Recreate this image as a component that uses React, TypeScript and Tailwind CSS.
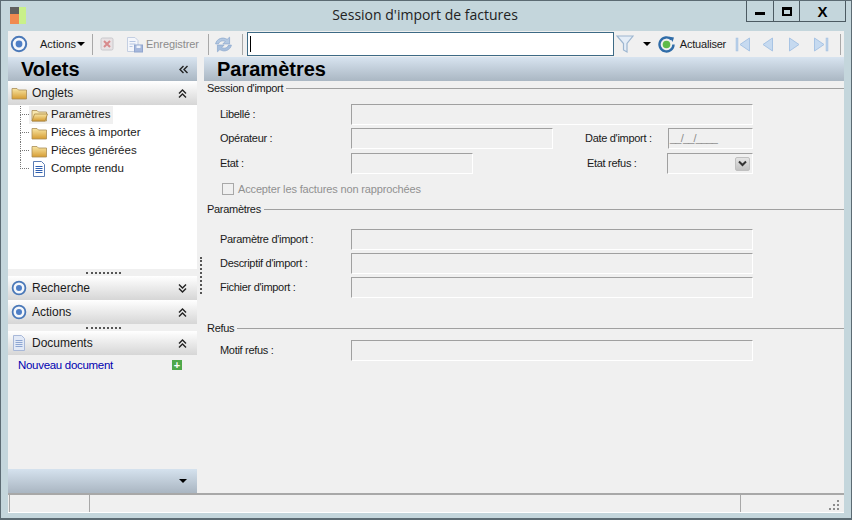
import React from "react";

const FONT = "font-['Liberation_Sans',Arial,sans-serif]";

function TargetIcon({ size = 18 }: { size?: number }) {
  return (
    <svg width={size} height={size} viewBox="0 0 18 18" className="shrink-0">
      <circle cx="9" cy="9" r="7.2" fill="#f4f7fb" stroke="#4a78b8" strokeWidth="2" />
      <circle cx="9" cy="9" r="3.4" fill="#4f7fc6" />
    </svg>
  );
}

function Folder({ open = false }: { open?: boolean }) {
  return (
    <svg width="17" height="14" viewBox="0 0 17 14" className="shrink-0">
      <defs>
        <linearGradient id="fold" x1="0" y1="0" x2="0" y2="1">
          <stop offset="0" stopColor="#f8e6a4" />
          <stop offset="1" stopColor="#d69c32" />
        </linearGradient>
      </defs>
      <path d="M1 2.500h5l1.500 1.500H15.500v9H1z" fill={open ? "#f7e7ae" : "url(#fold)"} stroke="#a98d55" strokeWidth="0.8" />
      {open && <path d="M3.500 6H16.500L14 13H1z" fill="url(#fold)" stroke="#a8843d" strokeWidth="0.8" />}
    </svg>
  );
}

function DocIcon({ light = false }: { light?: boolean }) {
  return (
    <svg width="14" height="16" viewBox="0 0 14 16" className="shrink-0">
      <path d="M1.500.5H9.500L12.500 3.500V15.500H1.500z" fill={light ? "#e2e9f6" : "#fff"} stroke={light ? "#a8b8d8" : "#5b7db5"} />
      <path d="M3.500 5.500h7M3.500 7.500h7M3.500 9.500h7M3.500 11.500h7" stroke={light ? "#8ea6d2" : "#2f5fb0"} />
    </svg>
  );
}

function Chevrons({ dir }: { dir: "up" | "down" | "left" }) {
  const d = "M1 5.500 4.500 2 8 5.500M1 9.500 4.500 6 8 9.500";
  const r = dir === "up" ? 0 : dir === "down" ? 180 : -90;
  return (
    <svg width="9" height="11" viewBox="0 0 9 11" className="shrink-0" style={{ transform: `rotate(${r}deg)` }}>
      <path d={d} fill="none" stroke="#222" strokeWidth="1.4" />
    </svg>
  );
}

function Caret({ className = "" }: { className?: string }) {
  return <span className={`block h-0 w-0 shrink-0 border-x-[4px] border-t-[4px] border-x-transparent border-t-black ${className}`} />;
}

function Sep({ className = "" }: { className?: string }) {
  return <span className={`h-[21px] w-0.5 shrink-0 border-l border-[#a8a8a8] ${className}`} />;
}

function Nav({ flip, bar, className }: { flip?: boolean; bar?: boolean; className: string }) {
  return (
    <svg width="16" height="15" viewBox="0 0 16 15" className={`shrink-0 ${className}`} style={flip ? { transform: "scaleX(-1)" } : undefined}>
      {bar && <rect x="1" y="1" width="2" height="13" fill="#b9d0ea" stroke="#a2bedd" strokeWidth="0.5" />}
      <path d="M14.500 1V14L5 7.500z" fill="#c6daf0" stroke="#a8c4e4" />
    </svg>
  );
}

function SectionHeader({ icon, title, chevron }: { icon: React.ReactNode; title: string; chevron: "up" | "down" }) {
  return (
    <div className="flex h-6 shrink-0 items-center bg-gradient-to-b from-white to-[#d6d6d6] pl-px">
      <span className="flex w-5 justify-center">{icon}</span>
      <span className="ml-[3px] text-[12px] text-[#1a1a1a]">{title}</span>
      <span className="ml-auto mr-[10px] flex"><Chevrons dir={chevron} /></span>
    </div>
  );
}

function Dots() {
  return (
    <div className="flex h-[7px] shrink-0 items-center justify-center">
      <span className="ml-[2px] w-[35px] border-t-2 border-dotted border-[#555]" />
    </div>
  );
}

function TreeRow({ icon, label, selected, last }: { icon: React.ReactNode; label: string; selected?: boolean; last?: boolean }) {
  return (
    <div className="flex h-[18px] items-center">
      <span className="ml-[12px] h-[18px] w-[9px] shrink-0">
        <span className="block h-[9px] w-full border-b border-l border-dotted border-[#777]" />
        {!last && <span className="block h-[9px] border-l border-dotted border-[#777]" />}
      </span>
      <span className={`flex h-[18px] items-center pl-px pr-[3px] ${selected ? "bg-[#f0f0f0]" : ""}`}>
        <span className="flex w-[18px] justify-center">{icon}</span>
        <span className="ml-[3px] text-[11.500px] text-[#1a1a1a]">{label}</span>
      </span>
    </div>
  );
}

function Field({ w, children }: { w: string; children?: React.ReactNode }) {
  return (
    <div className={`${w} flex h-[21px] shrink-0 items-center border border-b-white border-l-[#a0a0a0] border-r-white border-t-[#a0a0a0] bg-[#f0f0f0]`}>
      {children}
    </div>
  );
}

function Legend({ title, className = "" }: { title: string; className?: string }) {
  return (
    <div className={`flex h-3.5 items-center ${className}`}>
      <span className="ml-[3px] text-[11px] tracking-[-0.3px] text-[#1a1a1a]">{title}</span>
      <span className="ml-[3px] h-0 flex-1 border-t border-[#a0a0a0]" />
    </div>
  );
}

function Label({ children, className = "w-[131px]" }: { children: string; className?: string }) {
  return <span className={`shrink-0 text-[11px] tracking-[-0.3px] text-[#1a1a1a] ${className}`}>{children}</span>;
}

export default function App() {
  return (
    <div className={`flex h-[520px] w-[852px] flex-col overflow-hidden border border-b-2 border-[#5c6b73] bg-[#c4d6dc] ${FONT}`}>
      {/* barre de titre */}
      <div className="flex h-[30px] shrink-0 items-start">
        <div className="ml-[9px] mt-[6px] grid h-[17px] w-[16px] grid-cols-[9px_7px] grid-rows-[7px_10px]">
          <span className="bg-[#5f5f5f]" />
          <span className="row-span-2 bg-[#c9f08a]" />
          <span className="bg-[#f08a50]" />
        </div>
        <div className="flex-1 pl-[86px] pr-[8px] pt-[5px] text-center font-['Open_Sans',sans-serif] text-[14px] leading-[18px] text-[#222]">
          Session d'import de factures
        </div>
        <div className="mr-[5px] flex h-[21px] border border-t-0 border-[#4c5a62]">
          <div className="flex w-[27px] items-end justify-center border-r border-[#4c5a62] pb-[6px]">
            <span className="h-[3px] w-[10px] bg-black" />
          </div>
          <div className="flex w-[26px] items-center justify-center border-r border-[#4c5a62]">
            <span className="h-[9px] w-[10px] border-2 border-t-[3px] border-black" />
          </div>
          <div className="flex w-[45px] items-center justify-center text-[15px] font-bold leading-none text-black">X</div>
        </div>
      </div>

      <div className="mx-[7px] flex min-h-0 flex-1 flex-col border-b border-white bg-[#f0f0f0]">
        {/* barre d'outils */}
        <div className="flex h-[26px] shrink-0 items-center bg-[#f0f0f0] text-[11px]">
          <span className="ml-[2px] flex"><TargetIcon /></span>
          <span className="ml-[12px] text-[#1a1a1a]">Actions</span>
          <Caret className="ml-[1px]" />
          <Sep className="ml-[7px]" />
          <svg width="14" height="14" viewBox="0 0 14 14" className="ml-[6px] shrink-0">
            <rect x="1" y="1" width="12" height="12" rx="1.500" fill="#e8e2e4" stroke="#c8c8cc" />
            <path d="M4 4l6 6M10 4l-6 6" stroke="#d88a8c" strokeWidth="2" />
          </svg>
          <svg width="18" height="17" viewBox="0 0 18 17" className="ml-[12px] shrink-0">
            <path d="M1.500 1.500H9L12 4.500V15.500H1.500z" fill="#f4f6fb" stroke="#c4cfe2" />
            <path d="M3.500 5.500h6M3.500 8h6M3.500 10.500h3" stroke="#b6c6e2" />
            <rect x="8.500" y="9" width="8" height="7" fill="#a6b8dc" stroke="#90a5ce" />
            <rect x="10.500" y="9.500" width="4" height="2.500" fill="#eef2fa" />
          </svg>
          <span className="ml-[2px] tracking-[-0.1px] text-[#8c8c8c]">Enregistrer</span>
          <Sep className="ml-[9px]" />
          <svg width="17" height="17" viewBox="2 2 14 14" className="ml-[5px] shrink-0">
            <path d="M2.500 8.500C3.500 4 8.500 2.500 12 4.800L14 3V8.500H8.500L10.500 6.500C8.500 5.400 5.800 6 4.800 8.500z" fill="#b3c8e2" stroke="#94aed0" strokeWidth="0.7" />
            <path d="M15.500 9.500C14.500 14 9.500 15.500 6 13.200L4 15V9.500H9.500L7.500 11.500C9.500 12.600 12.200 12 13.200 9.500z" fill="#a6bedd" stroke="#94aed0" strokeWidth="0.7" />
          </svg>
          <Sep className="ml-[10px]" />
          <div className="ml-[3px] flex h-[24px] w-[367px] shrink-0 items-center border border-[#3d6a85] bg-white pl-[2px]">
            <span className="h-[16px] w-px bg-black" />
          </div>
          <svg width="18" height="20" viewBox="0 0 18 20" className="ml-[2px] shrink-0">
            <path d="M1 2H17L11 9.500V18L7.500 16V9.500z" fill="#e4edf7" stroke="#9db6d0" strokeWidth="1.200" />
          </svg>
          <Caret className="ml-[9px]" />
          <svg width="17" height="17" viewBox="0 0 17 17" className="ml-[7px] shrink-0">
            <path d="M13.500 3.500A7 7 0 1 0 15.500 8.500" fill="none" stroke="#2f6ca8" strokeWidth="2.400" />
            <path d="M11.500 0.800 16 1.500 14.500 6z" fill="#2f6ca8" />
            <circle cx="8.500" cy="8.500" r="3.800" fill="#5fbb4a" />
          </svg>
          <span className="ml-[5px] tracking-[-0.2px] text-[#1a1a1a]">Actualiser</span>
          <Nav bar className="ml-[9px]" />
          <Nav className="ml-[7px]" />
          <Nav flip className="ml-[14px]" />
          <Nav bar flip className="ml-[9px]" />
          <Sep className="ml-[11px]" />
        </div>

        {/* corps */}
        <div className="flex min-h-0 flex-1">
          {/* volets */}
          <div className="flex w-[189px] shrink-0 flex-col">
            <div className="flex h-6 shrink-0 items-center bg-gradient-to-b from-[#d8e4f0] to-[#aab7c3] pl-[13px]">
              <span className="text-[20px] font-bold leading-none text-black">Volets</span>
              <span className="ml-auto mr-[9px] flex"><Chevrons dir="left" /></span>
            </div>
            <SectionHeader icon={<Folder />} title="Onglets" chevron="up" />
            <div className="h-[164px] shrink-0 bg-white pt-px">
              <TreeRow icon={<Folder open />} label="Paramètres" selected />
              <TreeRow icon={<Folder />} label="Pièces à importer" />
              <TreeRow icon={<Folder />} label="Pièces générées" />
              <TreeRow icon={<DocIcon />} label="Compte rendu" last />
            </div>
            <Dots />
            <SectionHeader icon={<TargetIcon size={16} />} title="Recherche" chevron="down" />
            <SectionHeader icon={<TargetIcon size={16} />} title="Actions" chevron="up" />
            <Dots />
            <SectionHeader icon={<DocIcon light />} title="Documents" chevron="up" />
            <div className="flex flex-1 items-start pl-[10px] pt-[3px]">
              <span className="text-[11.500px] leading-[14px] tracking-[-0.3px] text-[#0000b0]">Nouveau document</span>
              <span className="ml-auto mr-[15px] mt-[2px] flex h-[10px] w-[10px] items-center justify-center bg-[#4fa84a] text-[11px] font-bold leading-none text-white">+</span>
            </div>
            <div className="flex h-6 shrink-0 items-center justify-end bg-gradient-to-b from-[#d5e2ee] to-[#aab6c2] pr-[10px]">
              <Caret />
            </div>
          </div>

          {/* séparateur */}
          <div className="flex w-[7px] shrink-0 items-center justify-center">
            <span className="h-[37px] border-l-2 border-dotted border-[#555]" />
          </div>

          {/* paramètres */}
          <div className="flex min-w-0 flex-1 flex-col">
            <div className="flex h-6 shrink-0 items-center bg-gradient-to-b from-[#d8e4f0] to-[#aab7c3] pl-[13px]">
              <span className="text-[20px] font-bold leading-none text-black">Paramètres</span>
            </div>
            <Legend title="Session d'import" />
            <div className="mt-[9px] flex items-center pl-4">
              <Label>Libellé :</Label>
              <Field w="w-[402px]" />
            </div>
            <div className="mt-[3px] flex items-center pl-4">
              <Label>Opérateur :</Label>
              <Field w="w-[202px]" />
              <Label className="ml-[32px] w-[83px]">Date d'import :</Label>
              <Field w="w-[85px]"><span className="ml-px text-[11px] tracking-[-0.8px] text-[#8c8c8c]">__/__/____</span></Field>
            </div>
            <div className="mt-1 flex items-center pl-4">
              <Label>Etat :</Label>
              <Field w="w-[122px]" />
              <Label className="ml-[114px] w-[80px]">Etat refus :</Label>
              <Field w="w-[86px]">
                <span className="ml-auto mr-[2px] flex h-[14px] w-[15px] items-center justify-center rounded-[2px] border border-[#c0c0c0] bg-gradient-to-b from-[#e4e4e4] to-[#c2c2c2]">
                  <svg width="9" height="7" viewBox="0 0 9 7"><path d="M1 1.500 4.500 5 8 1.500" fill="none" stroke="#333" strokeWidth="2" /></svg>
                </span>
              </Field>
            </div>
            <div className="mt-[7px] flex h-4 items-center pl-[18px]">
              <span className="h-[12px] w-[12px] shrink-0 border border-[#a8a8a8] bg-[#f0f0f0]" />
              <span className="ml-[4px] text-[11px] tracking-[-0.15px] text-[#909090]">Accepter les factures non rapprochées</span>
            </div>
            <Legend title="Paramètres" className="mt-[5px]" />
            <div className="mt-[13px] flex items-center pl-4">
              <Label>Paramètre d'import :</Label>
              <Field w="w-[402px]" />
            </div>
            <div className="mt-[3px] flex items-center pl-4">
              <Label>Descriptif d'import :</Label>
              <Field w="w-[402px]" />
            </div>
            <div className="mt-[3px] flex items-center pl-4">
              <Label>Fichier d'import :</Label>
              <Field w="w-[402px]" />
            </div>
            <Legend title="Refus" className="mt-[23px]" />
            <div className="mt-[5px] flex items-center pl-4">
              <Label>Motif refus :</Label>
              <Field w="w-[402px]" />
            </div>
          </div>
        </div>

        {/* barre d'état */}
        <div className="flex h-[19px] shrink-0 border-t-2 border-[#a8a8a8] pl-px">
          <span className="w-[80px] border-l border-[#a8a8a8]" />
          <span className="flex-1 border-l border-[#a8a8a8]" />
          <span className="relative w-[104px] border-l border-[#a8a8a8]">
            <svg width="12" height="12" viewBox="0 0 12 12" className="absolute bottom-[1px] right-[4px]">
              <path d="M9 1h2v2H9zM5 5h2v2H5zM9 5h2v2H9zM1 9h2v2H1zM5 9h2v2H5zM9 9h2v2H9z" fill="#8c8c8c" />
            </svg>
          </span>
        </div>
      </div>
      <div className="h-[5px] shrink-0" />
    </div>
  );
}
